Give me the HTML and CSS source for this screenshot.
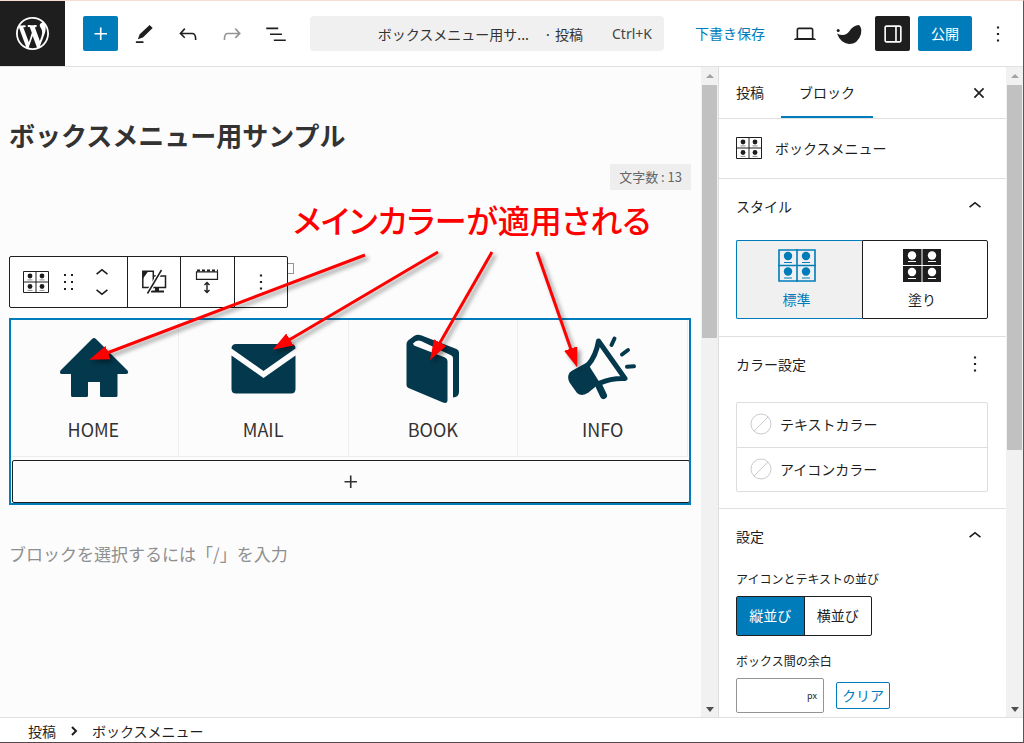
FILE: index.html
```html
<!DOCTYPE html>
<html lang="ja">
<head>
<meta charset="utf-8">
<meta name="viewport" content="width=device-width, initial-scale=1">
<title>ボックスメニュー用サンプル</title>
<link rel="stylesheet" href="styles.css">
</head>
<body>
<svg class="defs" width="0" height="0" aria-hidden="true">
  <symbol id="box-menu" viewBox="0 0 26 22">
    <path d="M.5.5h25v21H.5zM13 0v22M0 11h26" fill="none" stroke="currentColor"/>
    <circle cx="7" cy="5" r="2.400"/><circle cx="19" cy="5" r="2.400"/><circle cx="7" cy="15.500" r="2.400"/><circle cx="19" cy="15.500" r="2.400"/>
    <path d="M4.500 8.900h5M16.500 8.900h5M4.500 19.400h5M16.500 19.400h5" stroke="currentColor" stroke-width=".5"/>
  </symbol>
  <symbol id="more" viewBox="0 0 24 24"><path d="M13 19h-2v-2h2v2zm0-6h-2v-2h2v2zm0-6h-2V5h2v2z"/></symbol>
  <symbol id="up" viewBox="0 0 24 24"><path d="M6.500 12.400L12 8l5.500 4.400-.9 1.200L12 10l-4.500 3.600-1-1.200z"/></symbol>
  <symbol id="plus" viewBox="0 0 24 24"><path d="M11 12.500V17.500H12.500V12.500H17.500V11H12.500V6H11V11H6V12.500H11Z"/></symbol>
</svg>
<div class="app">
  <header class="header">
    <a class="logo" href="#" aria-label="投稿一覧">
      <svg width="33" height="33" viewBox="0 0 20 20"><path d="M20 10c0-5.510-4.490-10-10-10C4.480 0 0 4.490 0 10c0 5.520 4.480 10 10 10 5.510 0 10-4.480 10-10zM7.780 15.370L4.370 6.220c.55-.02 1.170-.08 1.170-.08.5-.06.44-1.130-.06-1.110 0 0-1.450.11-2.370.11-.18 0-.37 0-.58-.01C4.120 2.690 6.870 1.110 10 1.110c2.330 0 4.450.87 6.050 2.340-.68-.11-1.650.39-1.650 1.580 0 .74.45 1.360.9 2.100.35.61.55 1.360.55 2.460 0 1.490-1.400 5-1.400 5l-3.030-8.370c.54-.02.82-.17.82-.17.5-.05.44-1.250-.06-1.220 0 0-1.440.12-2.380.12-.87 0-2.330-.12-2.330-.12-.5-.03-.56 1.200-.06 1.220l.92.08 1.260 3.410zM17.410 10c.24-.64.74-1.870.43-4.250.7 1.290 1.050 2.710 1.050 4.250 0 3.290-1.730 6.240-4.400 7.780.97-2.590 1.940-5.200 2.920-7.780zM6.100 18.090C3.120 16.650 1.110 13.530 1.110 10c0-1.300.23-2.480.72-3.590C3.250 10.300 4.670 14.200 6.100 18.090zm4.030-6.630l2.580 6.980c-.86.29-1.760.45-2.710.45-.79 0-1.570-.11-2.290-.33.81-2.380 1.620-4.740 2.420-7.100z"/></svg>
    </a>
    <div class="tools">
      <button class="icon-button primary" aria-label="ブロックを追加"><svg width="26" height="26"><use href="#plus"/></svg></button>
      <button class="icon-button" aria-label="編集"><svg width="26" height="26" viewBox="0 0 24 24"><path d="m20 6.500-2.800-2.800L8 12.300l-1.700 4.600 4.700-1.600L20 6.500Zm-8.500 12.200H4.500v1.600h7v-1.600Z"/></svg></button>
      <button class="icon-button" aria-label="元に戻す"><svg width="26" height="26" viewBox="0 0 24 24"><path d="M18.300 11.700c-.6-.6-1.400-.9-2.300-.9H6.700l2.900-3.300-1.100-1-4.500 5L8.500 16l1-1-2.700-2.700H16c.5 0 .9.2 1.300.5 1 1 1 3.400 1 4.500v.3h1.500v-.2c0-1.500 0-4.300-1.500-5.700z"/></svg></button>
      <button class="icon-button faded" aria-label="やり直す"><svg width="26" height="26" viewBox="0 0 24 24"><path d="M15.600 6.500l-1.100 1 2.900 3.300H8c-.9 0-1.700.3-2.300.9-1.400 1.500-1.400 4.200-1.400 5.600v.2h1.500v-.3c0-1.100 0-3.500 1-4.500.3-.3.7-.5 1.300-.5h9.200L14.500 15l1.100 1.100 4.600-4.600-4.600-5z"/></svg></button>
      <button class="icon-button" aria-label="リスト表示"><svg width="26" height="26" viewBox="0 0 24 24"><path d="M3 6h11v1.500H3V6Zm3.500 5.500h11V13h-11v-1.500ZM21 17H10v1.500h11V17Z"/></svg></button>
    </div>
    <button class="document-bar"><span>ボックスメニュー用サ...</span><span class="type">· 投稿</span><kbd>Ctrl+K</kbd></button>
    <div class="actions">
      <button class="save">下書き保存</button>
      <button class="icon-button" aria-label="プレビュー"><svg width="26" height="26" viewBox="0 0 24 24"><path d="M20.500 16h-.7V8c0-1.100-.9-2-2-2H6.200c-1.100 0-2 .9-2 2v8h-.7c-.8 0-1.500.7-1.500 1.500h20c0-.8-.7-1.500-1.500-1.500zM5.700 8c0-.3.2-.5.5-.5h11.600c.3 0 .5.2.5.5v7.600H5.700V8z"/></svg></button>
      <button class="icon-button" aria-label="SWELL設定"><svg width="26" height="26" viewBox="835 21 26 26"><circle cx="837.200" cy="30.400" r="1.500"/><path d="M836 33.500Q844 37.500 848.500 31Q852 25.500 858 25Q861 27.500 860 34Q857 44 848 44Q839.500 43 836 33.500Z"/></svg></button>
      <button class="icon-button dark" aria-label="設定"><svg width="26" height="26" viewBox="0 0 24 24"><path d="M18 4H6c-1.100 0-2 .9-2 2v12c0 1.100.9 2 2 2h12c1.100 0 2-.9 2-2V6c0-1.100-.9-2-2-2zm-4 14.500H6c-.3 0-.5-.2-.5-.5V6c0-.3.2-.5.5-.5h8v13zm4.500-.5c0 .3-.2.5-.5.5h-2.500v-13H18c.3 0 .5.2.5.5v12z"/></svg></button>
      <button class="publish">公開</button>
      <button class="icon-button" aria-label="オプション"><svg width="26" height="26"><use href="#more"/></svg></button>
    </div>
  </header>

  <div class="body">
    <main class="canvas">
      <h1 class="title">ボックスメニュー用サンプル</h1>
      <p class="count">文字数 : 13</p>
      <div class="toolbar" role="toolbar" aria-label="ブロックツール">
        <div class="segment wide">
          <button aria-label="ボックスメニュー"><svg width="26" height="22"><use href="#box-menu"/></svg></button>
          <button aria-label="ドラッグ"><svg width="12" height="18" viewBox="0 0 12 18"><path d="M1 1h2v2H1zM8 1h2v2H8zM1 8h2v2H1zM8 8h2v2H8zM1 15h2v2H1zM8 15h2v2H8z"/></svg></button>
          <span class="movers">
            <button aria-label="上に移動"><svg width="26" height="26"><use href="#up"/></svg></button>
            <button aria-label="下に移動"><svg class="flip" width="26" height="26"><use href="#up"/></svg></button>
          </span>
        </div>
        <div class="segment"><button aria-label="表示デバイス"><svg width="26" height="26" viewBox="0 0 26 26"><path d="M1.800 2.200h10.500v16.300H1.800zM12.300 7h12.200v11.500H8" fill="none" stroke="currentColor" stroke-width="1.500"/><path d="M2 2h5.500L2 9.500zM14 18.500h4v3h5v2H10v-2h4z"/><path d="M20.500 1L6.500 24.500" stroke="#fff" stroke-width="4"/><path d="M20.500 1L6.500 24.500" stroke="currentColor" stroke-width="1.500"/></svg></button></div>
        <div class="segment"><button aria-label="余白"><svg width="26" height="26" viewBox="0 0 26 26"><path d="M2.500 2.800h21v7.500h-21z" fill="none" stroke="currentColor" stroke-width="1.200"/><path d="M3 1.500h21" stroke="currentColor" stroke-width="2" stroke-dasharray="3 2"/><path d="M13 14v9M10.500 16l2.500-2.500 2.500 2.500M10.500 21l2.500 2.500 2.500-2.500" fill="none" stroke="currentColor" stroke-width="1.400"/></svg></button></div>
        <div class="segment"><button aria-label="オプション"><svg width="26" height="26"><use href="#more"/></svg></button></div>
        <span class="tip"></span>
      </div>

      <section class="block">
        <nav class="menu">
          <a href="#"><svg width="72" height="72" viewBox="57 334 72 72"><path d="M94 338Q93 338 92 339L60.500 370.500Q59 374 62 374H71V395.500Q71 397 72.500 397H86.500Q88 397 88 395.500V382H100V395.500Q100 397 101.500 397H116Q117.500 397 117.500 395.500V374H126Q129.500 374 127.500 370.500L96 339Q95 338 94 338Z"/></svg><span>HOME</span></a>
          <a href="#"><svg width="72" height="72" viewBox="227 334 72 72"><path d="M231.500 348.500Q231.500 344 236 344H291Q295.500 344 295.500 348.500L263.500 371ZM231.500 355.500L263.500 378L295.500 355.500V389Q295.500 393.500 291 393.500H236Q231.500 393.500 231.500 389Z"/></svg><span>MAIL</span></a>
          <a href="#"><svg width="72" height="72" viewBox="397 334 72 72"><path d="M406.500 344Q406.500 342 408 340.500L414 336Q417.500 334 421 335.300L456.500 349Q459 350 459 352.500V392Q459 397 453 397.500V358Q453 356.500 451.500 355.500L421 341Q417 339 413 343.500L414 345.500L445 357.500Q447.500 358.500 447.500 361V400Q447.500 404 443 402.500L408.500 388Q406.500 387 406.500 385Z"/></svg><span>BOOK</span></a>
          <a href="#"><svg width="72" height="72" viewBox="567 334 72 72"><path d="M571.500 371L587 362.500L600 383L588.500 392.500Q582 397 577 393L569.500 382.500Q566 375 571.500 371Z"/><g fill="none" stroke="currentColor" stroke-linecap="round" stroke-linejoin="round"><path d="M588 365Q596 356 598.500 341L625 378.500Q611 378 600 383" stroke-width="5"/><path d="M599 386L603.500 395.500" stroke-width="7"/><path d="M614.500 338.500L611.500 345M628 350L622 354.500M627 366.700L634 366.300" stroke-width="4"/></g></svg><span>INFO</span></a>
        </nav>
        <button class="appender" aria-label="ブロックを追加"><svg width="26" height="26"><use href="#plus"/></svg></button>
      </section>
      <p class="placeholder">ブロックを選択するには「/」を入力</p>

      <div class="note">
        <p class="note-text">メインカラーが適用される</p>
        <svg class="arrows" width="700" height="400" viewBox="0 67 700 400" aria-hidden="true">
          <defs><marker id="head" markerUnits="userSpaceOnUse" markerWidth="20" markerHeight="14" refX="1" refY="7" orient="auto"><path d="M0 0L20 7L0 14Z" fill="#f00"/></marker></defs>
          <g stroke="#f00" stroke-width="3" marker-end="url(#head)"><path d="M365 255L107 353"/><path d="M438 252L289 340"/><path d="M492 252L439.500 343.500"/><path d="M537 252L571 349.500"/></g>
        </svg>
      </div>
    </main>
    <div class="scrollbar" aria-hidden="true"><i class="arrow-up"></i><b class="thumb short"></b><i class="arrow-down"></i></div>

    <aside class="sidebar">
      <div class="tabs">
        <button>投稿</button><button class="current">ブロック</button>
        <button class="close" aria-label="閉じる"><svg width="26" height="26" viewBox="0 0 24 24"><path d="M12 13.060l3.712 3.713 1.061-1.060L13.061 12l3.712-3.712-1.060-1.060L12 10.938 8.288 7.227l-1.061 1.060L10.939 12l-3.712 3.712 1.060 1.061L12 13.061z"/></svg></button>
      </div>
      <div class="card"><svg width="26" height="22"><use href="#box-menu"/></svg><span>ボックスメニュー</span></div>
      <section class="panel">
        <h2><button>スタイル<svg width="26" height="26"><use href="#up"/></svg></button></h2>
        <div class="styles">
          <button class="selected"><svg width="38" height="33" viewBox="0 0 38 33"><path d="M1 1h36v31H1zM19 0v33M0 16.500h38" fill="none" stroke="currentColor" stroke-width="1.600"/><circle cx="10" cy="7" r="4.200"/><circle cx="28" cy="7" r="4.200"/><circle cx="10" cy="22.500" r="4.200"/><circle cx="28" cy="22.500" r="4.200"/><path d="M6 13.500h8M24 13.500h8M6 29h8M24 29h8" stroke="currentColor"/></svg>標準</button>
          <button><svg width="38" height="33" viewBox="0 0 38 33"><path d="M0 0h18.500v16H0zM19.500 0H38v16H19.500zM0 17h18.500v16H0zM19.500 17H38v16H19.500z"/><g fill="#fff"><circle cx="9" cy="6.500" r="4.200"/><circle cx="29" cy="6.500" r="4.200"/><circle cx="9" cy="23" r="4.200"/><circle cx="29" cy="23" r="4.200"/></g><path d="M5 12.500h8M25 12.500h8M5 29.500h8M25 29.500h8" stroke="#fff"/></svg>塗り</button>
        </div>
      </section>
      <section class="panel colors">
        <h2>カラー設定<button class="more" aria-label="カラー設定オプション"><svg width="26" height="26"><use href="#more"/></svg></button></h2>
        <div class="color-list">
          <button><svg width="22" height="22" viewBox="0 0 22 22"><path d="M4 18L18 4"/><circle cx="11" cy="11" r="10"/></svg>テキストカラー</button>
          <button><svg width="22" height="22" viewBox="0 0 22 22"><path d="M4 18L18 4"/><circle cx="11" cy="11" r="10"/></svg>アイコンカラー</button>
        </div>
      </section>
      <section class="panel settings">
        <h2><button>設定<svg width="26" height="26"><use href="#up"/></svg></button></h2>
        <p class="label" id="direction">アイコンとテキストの並び</p>
        <div class="toggle" role="group" aria-labelledby="direction"><button class="on">縦並び</button><button>横並び</button></div>
        <label class="label" for="gap">ボックス間の余白</label>
        <div class="gap-row"><span class="field"><input id="gap" type="text" inputmode="numeric"><span>px</span></span><button class="clear">クリア</button></div>
      </section>
    </aside>
    <div class="scrollbar" aria-hidden="true"><i class="arrow-up"></i><b class="thumb long"></b><i class="arrow-down"></i></div>
  </div>

  <footer class="footer"><a href="#">投稿</a><svg width="8" height="12" viewBox="0 0 8 12"><path d="M2 2l4 4-4 4" fill="none" stroke="currentColor" stroke-width="2"/></svg><span>ボックスメニュー</span></footer>
</div>
</body>
</html>
```
FILE: styles.css
```css
* { box-sizing: border-box; }
body { margin: 0; color: #1e1e1e; font: 14px/20px "Noto Sans CJK JP", sans-serif; }
h1, h2, p { margin: 0; font-weight: 400; }
button { margin: 0; padding: 0; border: 0; background: none; color: inherit; font: inherit; cursor: pointer; }
a { color: inherit; text-decoration: none; }
svg { display: block; flex: none; fill: currentColor; }
.defs { position: absolute; }

.app { display: flex; flex-direction: column; height: 100vh; border: solid; border-width: 1px 1px 1px 0; border-color: #f6ddd1 #55565e #55474a; background: #fff; overflow: hidden; }

.header { display: flex; flex: none; align-items: center; height: 66px; padding-right: 7px; border-bottom: 1px solid #e0e0e0; }
.logo { display: grid; place-items: center; width: 65px; height: 65px; background: #1e1e1e; color: #fff; }
.tools, .actions { display: flex; align-items: center; gap: 8px; }
.tools { margin-left: 18px; }
.icon-button { display: grid; place-items: center; width: 36px; height: 35px; border-radius: 2px; }
.primary { width: 35px; background: #007cba; color: #fff; }
.dark { width: 35px; background: #1e1e1e; color: #fff; }
.faded { color: #949494; }
.document-bar { display: flex; flex: 1; align-items: center; justify-content: flex-end; min-width: 0; height: 35px; margin: 0 31px 0 16px; padding-right: 12px; border-radius: 4px; background: #f0f0f0; color: #333; white-space: nowrap; overflow: hidden; }
.type { margin-left: 15px; }
kbd { margin-left: 29px; color: #444; font: 14px/20px "Noto Sans", sans-serif; }
.save { margin-right: 14px; padding-bottom: 2px; color: #007cba; }
.publish { width: 54px; height: 35px; padding-bottom: 2px; border-radius: 2px; background: #007cba; color: #fff; }

.body { display: flex; flex: 1; min-height: 0; }
.canvas { position: relative; flex: 1; min-width: 0; padding: 48px 10px 0 9px; background: #fcfcfc; color: #333; overflow: hidden; }
.title { font-size: 26px; line-height: 40px; font-weight: 700; }
.count { width: fit-content; margin: 9px 0 0 auto; padding: 3px 9px; background: #eee; color: #666; font-size: 13px; }
.toolbar { position: relative; display: flex; width: 279px; height: 52px; margin-top: 66px; border: 1px solid #1e1e1e; border-radius: 2px; background: #fff; color: #1e1e1e; }
.segment { display: grid; flex: 1; place-items: center; border-left: 1px solid #1e1e1e; }
.segment.wide { display: flex; flex: none; gap: 14px; width: 117px; padding-left: 13px; border: 0; }
.movers { display: flex; flex-direction: column; gap: 4px; }
.movers button { height: 14px; }
.movers svg { margin: -6px 0; }
.flip { transform: rotate(180deg); }
.tip { position: absolute; left: 278px; top: 6px; width: 6px; height: 11px; border: 1px solid #949494; border-left: 0; }

.block { margin-top: 10px; padding-bottom: 2px; outline: 2px solid #007cba; outline-offset: -2px; }
.menu { display: grid; grid-template-columns: repeat(4, 1fr); margin-right: 3px; }
.menu a { display: flex; flex-direction: column; align-items: center; gap: 10px; height: 139px; padding-top: 16px; border: solid #eee; border-width: 0 1px 1px 0; font-size: 18px; line-height: 26px; }
.menu svg { color: #04384c; }
.appender { display: grid; place-items: center; width: calc(100% - 4px); height: 43px; margin: 3px 0 0 3px; border: 1px solid #1e1e1e; border-radius: 2px; }
.placeholder { margin-top: 36px; color: #8f8f8f; font-size: 17px; line-height: 26px; }

.note { position: absolute; top: 0; left: 0; color: #f00; pointer-events: none; }
.note-text { position: absolute; top: 128px; left: 293px; font-size: 32px; line-height: 48px; font-weight: 500; font-feature-settings: "palt"; white-space: nowrap; }
.arrows { filter: drop-shadow(3px 3px 2px #0006); }

.scrollbar { display: flex; flex: none; flex-direction: column; align-items: center; width: 17px; padding: 7px 0 5px; background: #f1f1f1; }
.arrow-up, .arrow-down { border: 4px solid transparent; border-top-width: 0; border-bottom: 4px solid #a3a3a3; }
.arrow-down { margin-top: auto; border-top: 5px solid #505050; border-bottom-width: 0; }
.thumb { width: 15px; margin-top: 7px; background: #c1c1c1; }
.short { height: 253px; }
.long { height: 365px; }

.sidebar { flex: none; width: 288px; border-left: 1px solid #ddd; overflow: hidden; }
.tabs { display: flex; height: 52px; border-bottom: 1px solid #e0e0e0; }
.tabs button { padding: 0 17px 2px; }
.tabs .current { padding: 0 18px 2px; box-shadow: inset 0 -2px #007cba; }
.tabs .close { margin-left: auto; padding: 0 14px; }
.card { display: flex; align-items: center; gap: 13px; height: 60px; padding: 0 17px 2px; border-bottom: 1px solid #e0e0e0; }
.panel { padding: 16px 18px 17px 17px; border-bottom: 1px solid #e0e0e0; }
.panel h2, .panel h2 button { display: flex; align-items: center; justify-content: space-between; font-size: 14px; line-height: 20px; }
.panel h2 { height: 22px; }
.panel h2 button { width: 100%; }
.panel h2 .more { width: auto; }
.styles { display: grid; grid-template-columns: 1fr 1fr; margin-top: 23px; }
.styles button { display: flex; flex-direction: column; align-items: center; gap: 7px; height: 79px; padding: 8px 6px 0 0; border: 1px solid #1e1e1e; border-radius: 0 2px 2px 0; }
.styles .selected { border-color: #007cba; border-right: 0; border-radius: 2px 0 0 2px; background: #f0f0f0; color: #007cba; }
.panel.colors { padding-bottom: 16px; }
.color-list { margin-top: 27px; border: 1px solid #ddd; border-radius: 2px; }
.color-list button { display: flex; align-items: center; gap: 8px; width: 100%; height: 44px; padding: 0 13px 2px; }
.color-list button + button { border-top: 1px solid #ddd; }
.color-list svg { fill: none; stroke: #ccc; }
.label { display: block; margin-top: 22px; font-size: 12px; line-height: 20px; }
.toggle { display: flex; width: 136px; height: 40px; margin-top: 7px; border: 1px solid #1e1e1e; border-radius: 2px; }
.toggle button { flex: 1; padding-bottom: 2px; }
.toggle .on { border-right: 1px solid #1e1e1e; background: #007cba; color: #fff; }
.toggle + .label { margin-top: 15px; }
.gap-row { display: flex; align-items: center; gap: 12px; margin-top: 7px; }
.field { display: flex; align-items: center; width: 88px; height: 35px; padding-right: 6px; border: 1px solid #949494; border-radius: 2px; font-size: 9px; }
.field input { flex: 1; min-width: 0; height: 100%; border: 0; background: none; outline: 0; font: inherit; }
.clear { width: 54px; height: 27px; padding-bottom: 2px; border: 1px solid #007cba; border-radius: 2px; color: #007cba; }

.footer { display: flex; flex: none; align-items: center; height: 25px; padding: 2px 28px 0; border-top: 1px solid #e0e0e0; }
.footer svg { margin: 0 14px; }
```
